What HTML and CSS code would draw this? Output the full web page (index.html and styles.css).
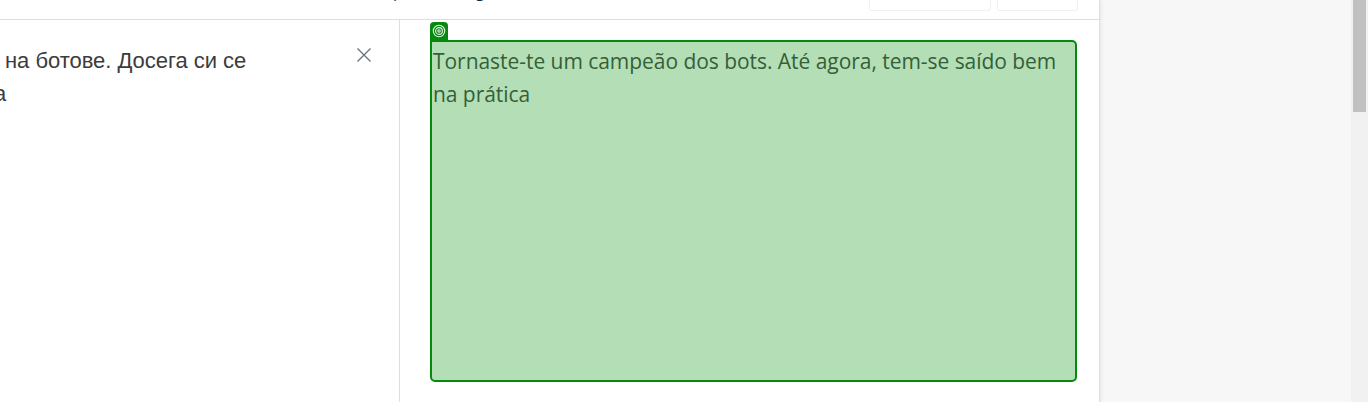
FILE: index.html
```
<!DOCTYPE html>
<html lang="pt">
<head>
<meta charset="utf-8">
<title>Translator</title>
<link rel="stylesheet" href="styles.css">
</head>
<body>
<div class="app">
  <main class="translator">
    <header class="toolbar">
      <div class="language"><span>p</span><span>g</span></div>
      <div class="actions"><div class="button button-wide"></div><div class="button"></div></div>
    </header>
    <div class="panes">
      <section class="source">
        <p class="source-text"><span>на ботове. Досега си се</span><br><span class="source-tail">а</span></p>
        <svg class="close" viewBox="0 0 14 14"><path d="M.5.5l13 13M13.5.5l-13 13"/></svg>
      </section>
      <section class="target">
        <div class="highlight">
          <div class="badge"><svg viewBox="0 0 14 14"><circle cx="7" cy="7" r="5.7"/><circle cx="7" cy="7" r="3.4"/><circle cx="7" cy="7" r="1.2"/></svg></div>
          <p class="target-text"><span>Tornaste-te um campeão dos bots. Até agora, tem-se saído bem</span><br><span>na prática</span></p>
        </div>
      </section>
    </div>
  </main>
  <aside class="gutter"></aside>
  <div class="scrollbar"><div class="thumb"></div></div>
</div>
</body>
</html>
```
FILE: styles.css
```
* { box-sizing: border-box; }
body { margin: 0; background: #f7f7f7; overflow: hidden; }
p { margin: 0; white-space: nowrap; }
.app { display: flex; width: 1368px; height: 402px; overflow: hidden; }
.translator { display: flex; flex-direction: column; width: 1100px; background: #fff; border-right: 1px solid #dadde3; box-shadow: 1px 0 4px rgba(0,0,0,.07); }
.gutter { flex: 1; }
.scrollbar { width: 17px; padding: 0 2px; background: #f1f1f1; }
.thumb { height: 112px; background: #c1c1c1; }
.toolbar { display: flex; justify-content: space-between; height: 20px; padding-right: 21px; border-bottom: 1px solid #dcdee4; overflow: hidden; }
.language { display: flex; gap: 73px; margin: -19px 0 0 393px; font: 16px/20px "Open Sans", sans-serif; color: #0f2b46; }
.actions { display: flex; gap: 6px; }
.button { width: 81px; height: 11px; border: 1px solid #f0f0f1; border-top: 0; border-radius: 0 0 3px 3px; }
.button-wide { width: 122px; }
.panes { display: flex; flex: 1; }
.source { display: flex; justify-content: space-between; width: 400px; padding: 24px 28px 0 5px; border-right: 1px solid #dcdee4; }
.source-text { font: 22px/33px "Liberation Sans", Arial, sans-serif; letter-spacing: -.03px; color: #3c3c3c; }
.source-tail { margin-left: -11px; }
.close { width: 14px; height: 14px; margin-top: 4px; fill: none; stroke: #6b7580; stroke-width: 1.4; }
.target { flex: 1; padding: 20px 22px 20px 30px; }
.highlight { position: relative; height: 342px; padding: 3px 0 0 1px; border: 2px solid #058a0d; border-radius: 0 5px 5px 5px; background: #b4deb6; }
.badge { position: absolute; left: -2px; top: -20px; width: 18px; height: 20px; padding: 2px; border-radius: 4px 4px 0 0; background: #058a0d; }
.badge svg { display: block; width: 14px; height: 14px; fill: none; stroke: #e4f4e5; stroke-width: 1.1; }
.target-text { font: 21px/33px "Open Sans", "Noto Sans", sans-serif; letter-spacing: -.045px; color: #345f38; }
```
